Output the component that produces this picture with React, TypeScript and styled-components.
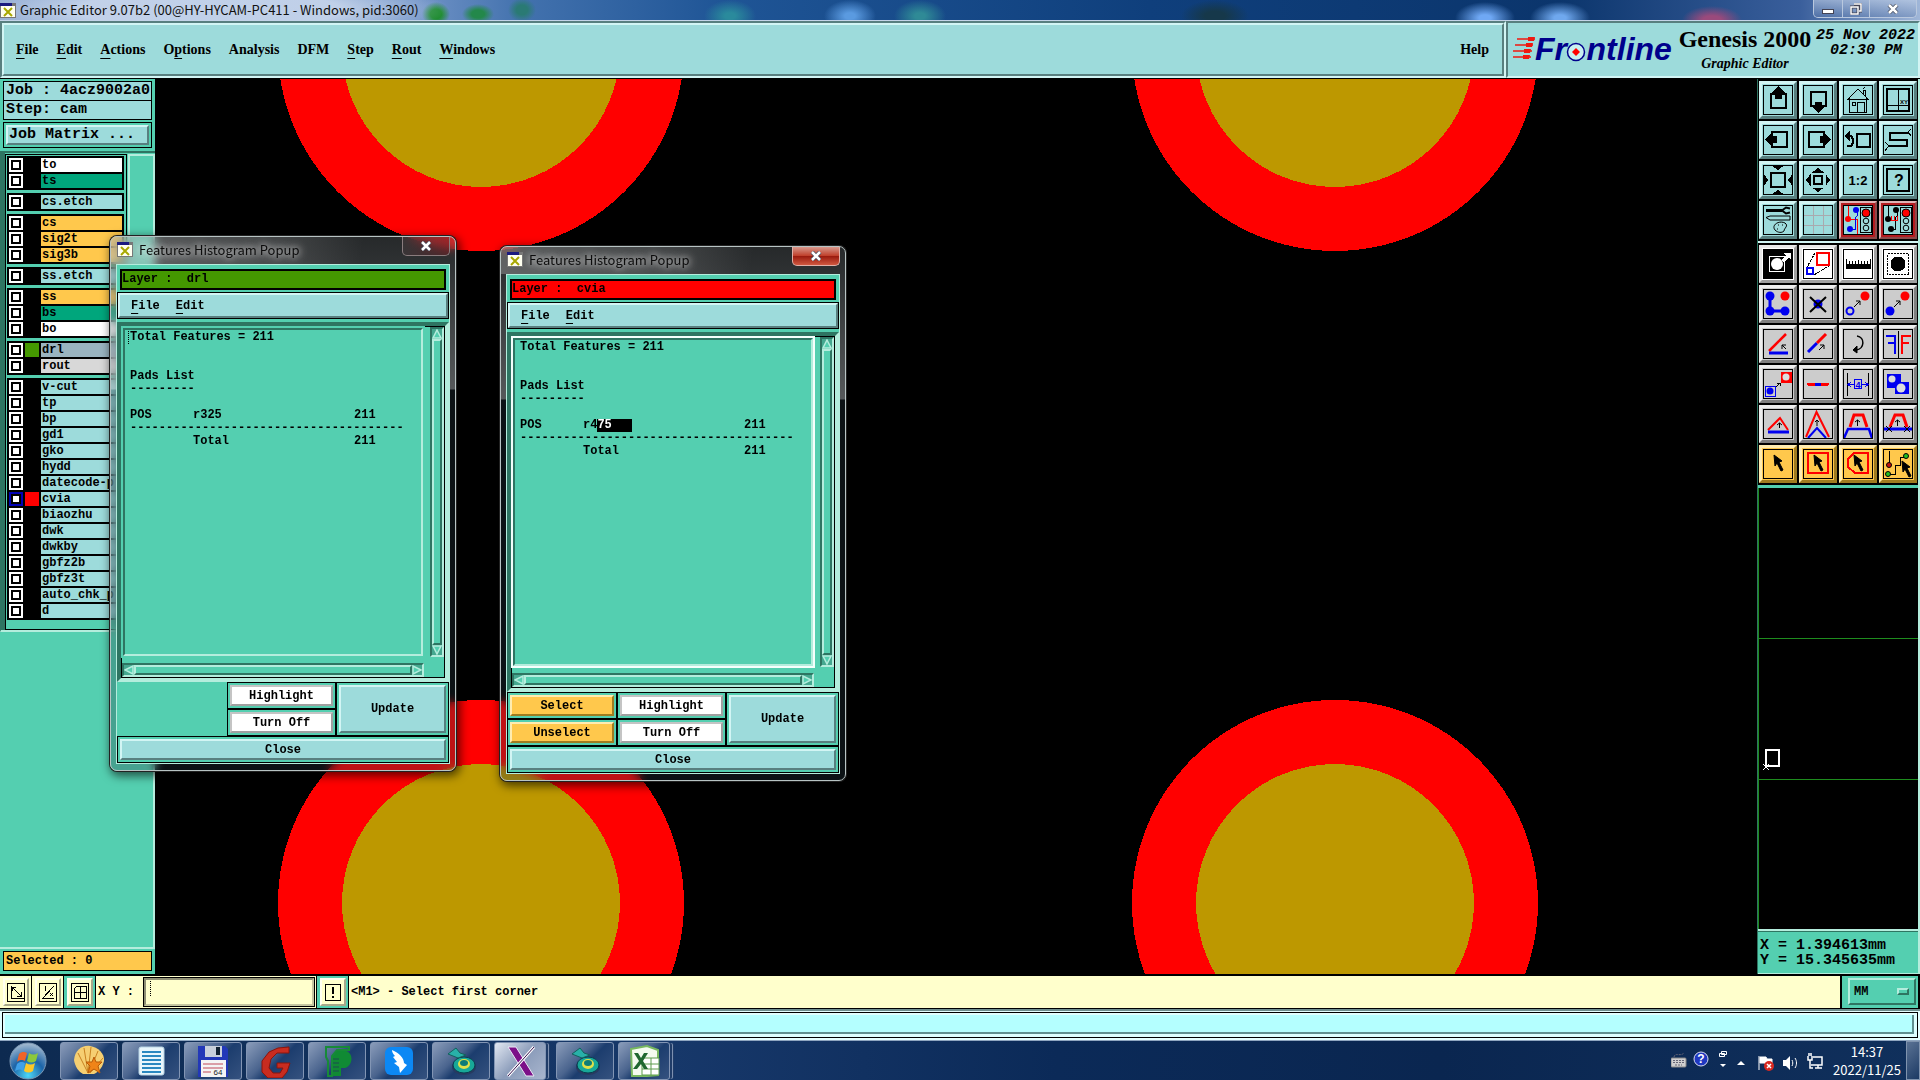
import React from "react";
import styled, { createGlobalStyle, css } from "styled-components";

const TEAL = "#54cfb0";
const TEAL_LIGHT = "#b4eddd";
const TEAL_DARK = "#2e7562";
const CYAN = "#9ddbdb";
const CYAN_LIGHT = "#d2f5f4";
const CYAN_DARK = "#587f7f";
const AMBER = "#ffc84c";
const CREAM = "#ffffcc";
const MONO = '"Liberation Mono", "Courier New", monospace';
const SERIF = '"Liberation Serif", "Times New Roman", serif';
const UI = '"Noto Sans CJK SC", "Open Sans", sans-serif';

const GlobalStyle = createGlobalStyle`
  *, *::before, *::after { box-sizing: border-box; }
  body { margin: 0; background: #000; overflow: hidden; }
  button, input, select { font: inherit; color: inherit; margin: 0; padding: 0; border: 0; border-radius: 0; }
  svg { display: block; }
`;

const raised = (light: string, dark: string, size = 2) => css`
  border: ${size}px solid;
  border-color: ${light} ${dark} ${dark} ${light};
`;

const Screen = styled.div`
  height: 100vh;
  display: flex;
  flex-direction: column;
  font: bold 12px/14px ${MONO};
  color: #000;
`;

/* ---------- window title ---------- */

const TitleBar = styled.header`
  height: 21px;
  flex: none;
  display: flex;
  align-items: center;
  gap: 4px;
  font: 13px/20px ${UI};
  color: #111;
  border-bottom: 1px solid #c4d4e8;
  background:
    radial-gradient(ellipse 240px 34px at 210px 10px, rgba(200, 214, 236, 0.9) 55%, transparent),
    radial-gradient(ellipse 14px 12px at 436px 14px, #1b8a2c 40%, transparent),
    radial-gradient(ellipse 16px 10px at 478px 14px, #23884a 40%, transparent),
    radial-gradient(ellipse 14px 12px at 522px 10px, #2a7a74 40%, transparent),
    radial-gradient(ellipse 26px 16px at 730px 16px, #2a8a9c 20%, transparent),
    radial-gradient(ellipse 26px 16px at 850px 16px, #5a9ae0 20%, transparent),
    radial-gradient(ellipse 26px 16px at 920px 16px, #2f8a96 20%, transparent),
    radial-gradient(ellipse 34px 16px at 1215px 16px, #16384a 30%, transparent),
    radial-gradient(ellipse 30px 16px at 1485px 18px, #6fa8f4 20%, transparent),
    radial-gradient(ellipse 30px 16px at 1560px 18px, #6fa8ee 20%, transparent),
    radial-gradient(ellipse 30px 14px at 1712px 20px, #9a4a7c 30%, transparent),
    linear-gradient(90deg, #8fa9d0 0, #6f92c6 420px, #4372ae 520px, #1f5596 720px, #0f3f7c 1150px, #0b356c 1560px, #3a5f9c 1800px, #9fb6d8 100%);
`;
const TitleText = styled.h1`
  flex: 1;
  margin: 0;
  font: inherit;
`;
const Controls = styled.div`
  display: flex;
  align-self: flex-start;
  margin-right: 3px;
  border: 1px solid #b9c8de;
  border-top: 0;
  border-radius: 0 0 5px 5px;
  overflow: hidden;
`;
const ControlButton = styled.button<{ $w: number }>`
  width: ${p => p.$w}px;
  height: 17px;
  display: grid;
  place-items: center;
  background: linear-gradient(rgba(190, 206, 230, 0.6), rgba(90, 120, 170, 0.4));
  & + & { border-left: 1px solid #b9c8de; }
`;

/* ---------- menu and brand ---------- */

const TopRow = styled.div`
  height: 58px;
  flex: none;
  display: flex;
  background: ${CYAN};
  border-bottom: 1px solid #000;
`;
const MenuFrame = styled.div`
  flex: 1;
  ${raised(CYAN_DARK, CYAN_LIGHT)}
`;
const MenuBar = styled.nav`
  height: 100%;
  display: flex;
  align-items: center;
  gap: 18px;
  padding: 0 13px 0 12px;
  ${raised(CYAN_LIGHT, CYAN_DARK)}
  font: bold 14px/20px ${SERIF};
`;
const MenuButton = styled.button<{ $end?: boolean }>`
  background: none;
  margin-left: ${p => (p.$end ? "auto" : "0")};
  u { text-underline-offset: 4px; text-decoration-thickness: 1px; }
`;
const Brand = styled.div`
  width: 414px;
  flex: none;
  display: flex;
  align-items: flex-start;
  justify-content: space-between;
  padding: 1px 3px 0 4px;
  ${raised(CYAN_DARK, CYAN_LIGHT)}
`;
const Product = styled.div`
  display: flex;
  flex-direction: column;
  align-items: center;
  font: bold 24px/30px ${SERIF};
`;
const ProductPart = styled.span`
  font: italic bold 14px/20px ${SERIF};
`;
const DateText = styled.time`
  font: italic bold 15px/15px ${MONO};
  text-align: right;
  padding-top: 4px;
  span { display: block; padding-right: 13px; }
`;

/* ---------- main area ---------- */

const Main = styled.main`
  flex: 1;
  min-height: 0;
  display: flex;
  position: relative;
  background: #000;
`;
const Side = styled.aside`
  width: 155px;
  flex: none;
  display: flex;
  flex-direction: column;
  background: ${TEAL};
  font-size: 15px;
  line-height: 18px;
`;
const InfoBox = styled.div`
  margin: 2px 3px 0;
  height: 20px;
  padding: 0 2px;
  border: 1px solid #000;
  background: ${CYAN};
  white-space: nowrap;
  overflow: hidden;
  & + & { margin-top: 0; height: 19px; border-top: 0; }
`;
const MatrixFrame = styled.div`
  margin: 2px 3px 3px;
  padding: 2px;
  border: 1px solid #000;
`;
const MatrixButton = styled.button`
  display: block;
  width: 100%;
  height: 20px;
  padding-left: 1px;
  text-align: left;
  line-height: 16px;
  background: ${CYAN};
  ${raised(CYAN_LIGHT, CYAN_DARK)}
`;
const LayerPane = styled.section`
  display: flex;
  flex: none;
  padding: 1px 0 0 4px;
  border-top: 2px solid ${TEAL_DARK};
  border-left: 1px solid ${TEAL_DARK};
  border-bottom: 2px solid ${TEAL_LIGHT};
  background: linear-gradient(90deg, ${TEAL_DARK} 4px, ${TEAL} 4px);
`;
const LayerList = styled.div`
  width: 122px;
  display: flex;
  flex-direction: column;
  gap: 3px;
  padding: 1px 2px 9px 1px;
  border: 1px solid #000;
  font-size: 12px;
  line-height: 14px;
`;
const LayerGroup = styled.div`
  display: grid;
  gap: 2px;
  padding: 2px;
  background: #000;
`;
const LayerRow = styled.label`
  display: grid;
  grid-template-columns: 14px 14px 1fr;
  column-gap: 2px;
  height: 14px;
`;
const LayerTick = styled.input`
  appearance: none;
  width: 14px;
  height: 14px;
  border: 2px solid #fff;
  background: #fff;
  box-shadow: inset 0 0 0 2px #000;
  &:checked { border-color: #0000b4; }
`;
const Swatch = styled.span<{ $color: string }>`
  background: ${p => p.$color};
`;
const LayerName = styled.span<{ $color: string }>`
  background: ${p => p.$color};
  padding-left: 1px;
  white-space: nowrap;
  overflow: hidden;
`;
const LayerTrough = styled.div`
  flex: 1;
  margin-left: 1px;
  border: 2px solid ${TEAL_LIGHT};
  border-bottom: 0;
`;
const SideFill = styled.div`
  flex: 1;
  border-right: 2px solid ${TEAL_LIGHT};
  border-bottom: 2px solid ${TEAL_LIGHT};
`;
const SelectedBox = styled.div`
  margin: 2px 3px 3px;
  height: 20px;
  padding-left: 2px;
  border: 1px solid #000;
  background: ${AMBER};
  font-size: 12px;
`;
const Canvas = styled.div`
  flex: 1;
  min-width: 0;
  svg { width: 100%; height: 100%; }
`;
const Tools = styled.aside`
  width: 163px;
  flex: none;
  display: flex;
  flex-direction: column;
  background: #000;
  border-left: 1px solid ${TEAL_DARK};
  border-right: 2px solid ${TEAL_LIGHT};
`;
const Palette = styled.div<{ $edge: string }>`
  display: grid;
  grid-template-columns: repeat(4, 38px);
  gap: 2px;
  padding: 2px 0 2px 1px;
  border-bottom: 2px solid ${p => p.$edge};
`;
type Tone = "cyan" | "red" | "white" | "gray" | "amber";
const tones: Record<Tone, [string, string, string]> = {
  cyan: [CYAN, CYAN_LIGHT, CYAN_DARK],
  red: [CYAN, "#e0b4b4", "#8a4a4a"],
  white: ["#fff", "#e8e8e8", "#a0a0a0"],
  gray: ["#cccccc", "#eeeeee", "#808080"],
  amber: [AMBER, "#ffecb0", "#a07c20"],
};
const ToolButton = styled.button<{ $tone: Tone }>`
  width: 38px;
  height: 38px;
  display: grid;
  place-items: center;
  background: ${p => tones[p.$tone][0]};
  ${p => raised(tones[p.$tone][1], tones[p.$tone][2], p.$tone === "red" ? 2 : 3)}
  box-shadow: ${p => (p.$tone === "red" ? "inset 0 0 0 2px #b41c20" : "none")};
`;
const Overview = styled.div`
  flex: 1;
  border-top: 1px solid ${TEAL};
  border-bottom: 2px solid ${TEAL_LIGHT};
  svg { width: 100%; height: 100%; }
`;
const Coordinates = styled.div`
  height: 43px;
  flex: none;
  padding: 6px 2px;
  border-top: 1px solid ${TEAL_DARK};
  border-bottom: 1px solid ${TEAL_LIGHT};
  background: ${TEAL};
  font-size: 15px;
  line-height: 15px;
`;

/* ---------- command line ---------- */

const CommandBar = styled.div`
  height: 35px;
  flex: none;
  display: flex;
  align-items: stretch;
  background: ${CREAM};
  border-top: 2px solid #000;
  border-bottom: 1px solid #000;
`;
const ModeCell = styled.div<{ $bg: string }>`
  width: 32px;
  display: grid;
  place-items: center;
  background: ${p => p.$bg};
  border-right: 1px solid #000;
`;
const ModeButton = styled.button`
  width: 26px;
  height: 28px;
  display: grid;
  place-items: center;
  background: ${CREAM};
  ${raised("#fffff0", "#a8a88a")}
`;
const XYLabel = styled.label`
  width: 47px;
  padding-left: 2px;
  align-self: center;
`;
const XYInput = styled.input`
  width: 170px;
  background: ${CREAM};
  margin-top: 2px;
  padding: 0 4px;
  border: 2px solid;
  border-color: #8e8e74 #c6c6a0 #c6c6a0 #8e8e74;
  outline: 1px solid #000;
`;
const Entry = styled.div`
  position: relative;
  display: flex;
  padding: 0 2px 2px 1px;
  border-right: 1px solid #000;
`;
const Caret = styled.i`
  position: absolute;
  left: 7px;
  top: 5px;
  height: 15px;
  border-left: 1px dotted #000;
`;
const Prompt = styled.output`
  flex: 1;
  align-self: center;
  padding-left: 2px;
`;
const UnitCell = styled.div`
  position: relative;
  width: 80px;
  padding: 2px;
  border-left: 2px solid #000;
  border-right: 2px solid #000;
  background: ${TEAL};
`;
const UnitSelect = styled.select`
  appearance: none;
  display: block;
  width: 68px;
  height: 27px;
  margin-left: 4px;
  padding-left: 4px;
  background: ${TEAL};
  ${raised(TEAL_LIGHT, TEAL_DARK)}
`;
const UnitMark = styled.i`
  position: absolute;
  right: 9px;
  top: 12px;
  width: 12px;
  height: 7px;
  pointer-events: none;
  ${raised(TEAL_LIGHT, TEAL_DARK)}
`;
const Strip = styled.div`
  height: 31px;
  flex: none;
  background: #e4ffff;
  padding: 1px 2px 2px;
  border-top: 2px solid #6f8f8f;
`;
const StripField = styled.div`
  height: 100%;
  border: 1px solid #000;
  background: #b4ffff;
  box-shadow: inset 2px 2px #e0ffff, inset -3px -3px #dcffff, inset -5px -5px #5f9090;
`;

/* ---------- taskbar ---------- */

const Taskbar = styled.footer`
  height: 40px;
  flex: none;
  display: flex;
  align-items: center;
  gap: 4px;
  color: #fff;
  border-top: 1px solid #8fa6c0;
  background: linear-gradient(90deg, #0d2a50, #17386a 35%, #0b2a58 55%, #0a2650 75%, #10305c);
  font: 13px/18px ${UI};
`;
const Orb = styled.button`
  width: 56px;
  background: none;
  display: grid;
  place-items: center;
`;
const TaskButton = styled.button<{ $active?: boolean; $stack?: boolean }>`
  width: ${p => (p.$stack ? 52 : 58)}px;
  margin-right: ${p => (p.$stack ? 6 : 0)}px;
  height: 38px;
  display: grid;
  place-items: center;
  border: 1px solid #8295b4;
  border-radius: 3px;
  background: ${p => p.$active
    ? "linear-gradient(135deg, #e2e8f2, #8b9cba 50%, #a9b6ce)"
    : "linear-gradient(135deg, #8a9cba, #4a648e 40%, #1c3d6e 55%, #35527f)"};
  box-shadow: ${p => (p.$stack ? "3px 0 0 -1px #203c68, 4px 0 0 -1px #7d90b0, 6px 0 0 -2px #203c68" : "none")};
`;
const Tray = styled.div`
  margin-left: auto;
  display: flex;
  align-items: center;
`;
const Clock = styled.time`
  width: 78px;
  margin-left: 5px;
  text-align: center;
  span { display: block; }
`;
const ShowDesktop = styled.button`
  width: 14px;
  height: 39px;
  border: 1px solid #7f93ae;
  background: linear-gradient(135deg, #5a7294, #1c3a64);
`;

/* ---------- popup windows ---------- */

const Popup = styled.section<{ $x: number; $y: number }>`
  position: absolute;
  left: ${p => p.$x}px;
  top: ${p => p.$y}px;
  width: 346px;
  padding: 0 5px 6px;
  border: 1px solid #b8c4c4;
  border-radius: 7px;
  box-shadow: 0 0 0 1px #222, 2px 3px 10px 2px rgba(0, 0, 0, 0.6);
  backdrop-filter: blur(5px);
  background:
    linear-gradient(100deg, rgba(255, 255, 255, 0.25), rgba(255, 255, 255, 0.12) 170px, transparent 250px) top / 100% 27px no-repeat,
    linear-gradient(rgba(110, 118, 122, 0.35), rgba(170, 176, 180, 0.5) 152px, rgba(40, 60, 70, 0.3) 153px);
`;
const PopupTitle = styled.header`
  height: 27px;
  display: flex;
  align-items: center;
  gap: 6px;
  padding: 0 0 2px 1px;
  font: 13px/20px ${UI};
  color: #0c0c0c;
`;
const PopupName = styled.h2`
  flex: 1;
  margin: 0;
  padding: 0;
  font: inherit;
  text-shadow: 0 0 6px rgba(255, 255, 255, 0.6), 0 0 10px rgba(255, 255, 255, 0.6), 0 0 12px rgba(255, 255, 255, 0.5);
`;
const PopupClose = styled.button<{ $hot?: boolean }>`
  width: 48px;
  height: 19px;
  align-self: flex-start;
  display: grid;
  place-items: center;
  border: 1px solid ${p => (p.$hot ? "#e0b0a8" : "#8a7c7e")};
  border-top: 0;
  border-radius: 0 0 5px 5px;
  background: ${p => (p.$hot
    ? "linear-gradient(#d8988c, #c0402c 48%, #98180c 50%, #d05840)"
    : "linear-gradient(90deg, rgba(70, 60, 62, 0.5), rgba(110, 30, 36, 0.5))")};
`;
const PopupBody = styled.div`
  background: ${TEAL};
  border: 1px solid ${TEAL_LIGHT};
`;
const LayerBar = styled.div<{ $color: string }>`
  height: 21px;
  margin: 4px 3px 2px;
  line-height: 17px;
  white-space: pre;
  border: 2px solid #000;
  background: ${p => p.$color};
`;
const PopupMenu = styled.nav`
  height: 27px;
  display: flex;
  gap: 16px;
  padding-left: 11px;
  background: ${CYAN};
  outline: 1px solid #000;
  outline-offset: -1px;
  ${raised(CYAN_LIGHT, CYAN_DARK, 3)}
`;
const ScrollWindow = styled.div`
  height: 360px;
  margin-top: 3px;
  ${raised(TEAL_DARK, TEAL_LIGHT, 4)}
`;
const ScrollGrid = styled.div`
  height: 100%;
  display: grid;
  grid-template: 1fr 14px / 1fr 14px;
  gap: 6px;
  border: 1px solid #000;
`;
const Report = styled.div<{ $focus?: boolean }>`
  padding: 1px 5px;
  line-height: 13px;
  position: relative;
  ${raised(TEAL_DARK, TEAL_LIGHT)}
  outline: 2px solid ${p => (p.$focus ? "#f4fffc" : TEAL)};
  margin: 1px;
`;
const Line = styled.div`
  height: 13px;
  white-space: pre;
`;
const Record = styled.div`
  display: grid;
  grid-template-columns: 63px 161px auto;
  height: 13px;
`;
const Marked = styled.mark`
  display: inline-block;
  width: 35px;
  background: #000;
  color: #fff;
`;
const ReportCaret = styled(Caret)`
  left: 3px;
  top: 1px;
  height: 13px;
`;
const VScroll = styled.div`
  display: flex;
  flex-direction: column;
  ${raised(TEAL_DARK, TEAL_LIGHT)}
  background: #45a890;
`;
const HScroll = styled.div`
  display: flex;
  ${raised(TEAL_DARK, TEAL_LIGHT)}
  background: #45a890;
`;
const Thumb = styled.div`
  flex: 1;
  background: ${TEAL};
  ${raised(TEAL_LIGHT, TEAL_DARK)}
`;
const ActionGrid = styled.div`
  display: grid;
  grid-template: 27px 27px 27px / 110px 109px 1fr;
`;
const ActionCell = styled.div<{ $area: string }>`
  grid-area: ${p => p.$area};
  padding: 2px;
  border: 1px solid #000;
`;
const Action = styled.button<{ $tone: Tone }>`
  display: block;
  width: 100%;
  height: 100%;
  background: ${p => tones[p.$tone][0]};
  ${p => raised(p.$tone === "white" ? "#c4c4c4" : tones[p.$tone][1], tones[p.$tone][2])}
`;

/* ---------- drawings ---------- */

const K = "#000", R = "#f00", B = "#0000f0";

const Glyph = ({ children }: { children?: React.ReactNode }) => (
  <svg width="30" height="30" viewBox="0 0 30 30" fill="none" stroke={K} strokeWidth="1" shapeRendering="crispEdges" aria-hidden="true">
    {children}
    <rect x=".5" y=".5" width="29" height="29" />
  </svg>
);
const SmallText = ({ x, y, size, fill = K, children }: { x: number; y: number; size: number; fill?: string; children: string }) => (
  <text x={x} y={y} fontSize={size} fill={fill} stroke="none" textAnchor="middle" fontFamily="Liberation Sans" fontWeight="bold">{children}</text>
);
const TrafficLight = () => (
  <g shapeRendering="auto">
    <rect x="17.500" y="2.500" width="11" height="25" />
    <circle cx="23" cy="8" r="4" fill={R} />
    <circle cx="23" cy="16" r="2.800" />
    <circle cx="23" cy="23" r="2.800" />
  </g>
);
const Pointer = ({ x = 0, y = 0 }: { x?: number; y?: number }) => (
  <path transform={`translate(${x} ${y})`} d="M11 6l8 6-3 1 4 8-2 1-4-8-2 3z" fill={K} stroke={K} shapeRendering="auto" />
);

type Tool = [string, Tone, React.ReactNode];

const viewTools: Tool[] = [
  ["Pan up", "cyan", <><rect x="8" y="9" width="15" height="14" strokeWidth="2" /><path d="M15.500 2l5 5h-2v6h-6V7h-2z" fill={K} /></>],
  ["Pan down", "cyan", <><rect x="8" y="7" width="15" height="14" strokeWidth="2" /><path d="M15.500 27l5-5h-2v-5h-6v5h-2z" fill={K} /></>],
  ["Home view", "cyan", <path d="M4 15L15 4l11 11M6.500 13v14h17V13M4 14.500h22M14.500 27V17.500h7V27M9.500 17.500h3v3h-3zM20.500 9V5.500h2V11M20 4l2-2" />],
  ["Split view", "cyan", <><rect x="4" y="4" width="22" height="22" strokeWidth="2" /><path d="M15.500 4v22M4 20.500h22" /><SmallText x={21} y={19} size={6}>XY</SmallText></>],
  ["Pan left", "cyan", <><rect x="9" y="7" width="15" height="15" strokeWidth="2" /><path d="M3 14.500l5-5v2h5v6H8v2z" fill={K} /></>],
  ["Pan right", "cyan", <><rect x="6" y="7" width="15" height="15" strokeWidth="2" /><path d="M27 14.500l-5-5v2h-5v6h5v2z" fill={K} /></>],
  ["Previous view", "cyan", <><rect x="14" y="9" width="13" height="13" strokeWidth="2" /><path d="M4 21h4l2-3v-4l-2-3H5" strokeWidth="2" /><path d="M2 11l4-4v8z" fill={K} /></>],
  ["Serpentine", "cyan", <><path d="M26 8H7v7h17v6H5" strokeWidth="2" /><path d="M25 7l3-3M26 8l2 3M5 20l-3-3M5 22l-3 4" /></>],
  ["Zoom in", "cyan", <><rect x="8" y="8" width="14" height="14" strokeWidth="2" /><path d="M11 1.500h8l-4 3zM11 28.500h8l-4-3zM1.500 11v8l3-4zM28.500 11v8l-3-4z" fill={K} /></>],
  ["Zoom out", "cyan", <><rect x="11" y="11" width="8" height="8" strokeWidth="2" /><path d="M10.500 7h9L15 3.500zM10.500 23h9L15 26.500zM7 10.500v9L3.500 15zM23 10.500v9l3.500-4.500z" fill={K} /></>],
  ["Scale one to two", "cyan", <SmallText x={15} y={20} size={13}>1:2</SmallText>],
  ["Query", "cyan", <><rect x="4" y="4" width="22" height="22" strokeWidth="2" /><SmallText x={16} y={21} size={16}>?</SmallText></>],
  ["Settings", "cyan", <g shapeRendering="auto"><path d="M3 5.500h16" strokeWidth="3" /><path d="M27 3.500l-4-1-4 3 4 3 4-1" strokeWidth="2" /><path d="M3 12.500l4-1.500h20v4H7zM12 25c-4-5 4-10 10-7 4 3-1 5-1 8-2 2-6 2-9-1zM15 20h1M19 20h1M14 24h1" /></g>],
  ["Grid", "cyan", <path d="M10.500 1v28M20.500 1v28M1 10.500h28M1 20.500h28" stroke="#a9a9ae" />],
  ["Net check", "red", <><path d="M5.500 1v13h9v15" stroke={R} /><path d="M14.500 4v6l-2 3v11h-5" stroke={B} /><g stroke="none" shapeRendering="auto"><circle cx="5" cy="14" r="3" fill={R} /><circle cx="13" cy="5" r="3" fill={B} /><circle cx="7" cy="24" r="3" fill={B} /></g><TrafficLight /></>],
  ["Rule check", "red", <><path d="M5.500 1v13M14.500 4v6l-2 3v11h-4" /><path d="M7 15.500h8M8.500 11v4M11.500 11v4M14.500 11v4" stroke={R} /><g fill={K} stroke="none" shapeRendering="auto"><circle cx="5" cy="14" r="3" /><circle cx="13" cy="5" r="3" /><circle cx="8" cy="24" r="3" /></g><TrafficLight /></>],
];

const editTools: Tool[] = [
  ["Pad to outline", "white", <><rect x="1" y="1" width="28" height="28" fill={K} /><rect x="6.500" y="7.500" width="15" height="15" stroke="#fff" /><circle cx="14" cy="15" r="6" fill="#fff" stroke="none" shapeRendering="auto" /><path d="M18 11l5-5-3-2h8v7l-2-2-5 4z" fill="#fff" stroke="none" /></>],
  ["Copy scaled", "white", <><path d="M3 20L13 2M11 26l16-10" strokeDasharray="3 1" /><rect x="14" y="4" width="12" height="12" stroke={R} strokeWidth="2" /><rect x="4" y="19" width="6" height="6" stroke={B} strokeWidth="2" /></>],
  ["Measure", "white", <><rect x="3" y="15" width="25" height="5" fill={K} stroke="none" /><path d="M3.500 10v5M6.500 12v3M9.500 12v3M12.500 12v3M15.500 11v4M18.500 12v3M21.500 12v3M24.500 12v3M27.500 10v5" /></>],
  ["Snap to pad", "white", <><rect x="4.500" y="4.500" width="21" height="21" strokeDasharray="2 1" /><circle cx="15" cy="15" r="7" fill={K} /></>],
  ["Add feature", "gray", <g shapeRendering="auto"><path d="M7 7v15h16" stroke={B} strokeWidth="3" /><g stroke="none"><circle cx="7" cy="7" r="4.500" fill={B} /><circle cx="7" cy="22" r="4.500" fill={B} /><circle cx="22" cy="22" r="4.500" fill={B} /><circle cx="22" cy="7" r="4.500" fill={R} /></g></g>],
  ["Delete feature", "gray", <g shapeRendering="auto"><circle cx="15" cy="15" r="4.500" fill={B} stroke="none" /><path d="M7 8l16 15M23 8L7 23" strokeWidth="2" /></g>],
  ["Move feature", "gray", <g shapeRendering="auto"><circle cx="22" cy="7" r="4.500" fill={R} stroke="none" /><circle cx="7" cy="22" r="3.500" stroke={B} strokeWidth="2" /><path d="M11 18l6-6M13 12h4v4" /></g>],
  ["Copy feature", "gray", <g shapeRendering="auto"><circle cx="22" cy="7" r="4.500" fill={R} stroke="none" /><circle cx="7" cy="22" r="4.500" fill={B} stroke="none" /><path d="M11 18l6-6M13 12h4v4" /></g>],
  ["Rotate line", "gray", <g shapeRendering="auto"><path d="M6 22L23 5" stroke={R} strokeWidth="2.500" /><path d="M6 24h19" stroke={B} strokeWidth="3" /><path d="M23 20l-4-4M19 20v-4h4" /></g>],
  ["Extend line", "gray", <g shapeRendering="auto"><path d="M5 23l9-9" stroke={B} strokeWidth="3" /><path d="M14 14l9-9" stroke={R} strokeWidth="3" /><path d="M16 21l5-5M17 16h4v4" /></g>],
  ["Rotate", "gray", <g shapeRendering="auto"><path d="M14 7c8 1 8 13-1 14" strokeWidth="1.500" /><path d="M10 21l4-4v7z" fill={K} /></g>],
  ["Mirror", "gray", <><path d="M15.500 2v28" /><path d="M3 7h9v18M5 14h7" stroke={B} strokeWidth="2" /><path d="M28 7h-9v18M26 14h-7" stroke={R} strokeWidth="2" /></>],
  ["Replace pad", "gray", <><rect x="18" y="3" width="11" height="11" fill={R} stroke="none" /><rect x="2.500" y="17.500" width="10" height="10" stroke={B} /><g stroke="none" shapeRendering="auto"><circle cx="23" cy="8" r="3.500" fill="#ddd" /><circle cx="7" cy="22" r="3.500" fill={B} /></g><path d="M13 18l4-4M14 14h3v3" /></>],
  ["Join lines", "gray", <><path d="M5 15h20" stroke={R} strokeWidth="3" strokeLinecap="round" /><path d="M12 15h6" stroke={B} strokeWidth="3" /></>],
  ["Spacing", "gray", <><path d="M4.500 4v23M25.500 4v23" /><g stroke={B}><path d="M5 15.500h7M18 15.500h7M8 13l-3 2.500L8 18M22 13l3 2.500L22 18" /><rect x="11.500" y="10.500" width="7" height="9" /></g><SmallText x={15} y={19} size={9} fill={B}>4</SmallText></>],
  ["Merge pads", "gray", <><rect x="4" y="5" width="14" height="14" fill={B} stroke="none" /><rect x="12" y="13" width="14" height="12" fill={B} stroke="none" /><g fill="#ddd" stroke="none" shapeRendering="auto"><circle cx="9" cy="10" r="3.500" /><circle cx="18" cy="19" r="4.500" /></g></>],
  ["Raise line", "gray", <g shapeRendering="auto"><path d="M5 21L17 9l8 12" stroke={R} strokeWidth="2" /><path d="M5 23h21" stroke={B} strokeWidth="3" /><path d="M16.500 19v-5M14 16l2.500-2 2.500 2" /></g>],
  ["Raise corner", "gray", <g shapeRendering="auto"><path d="M3 28L13.500 3 26 28" stroke={R} strokeWidth="2" /><path d="M5 29l9-10 9 10" stroke={B} strokeWidth="2" /><path d="M14 17v-6M12 13l2-2 2 2" /></g>],
  ["Raise segment", "gray", <g shapeRendering="auto"><path d="M7 18L11 6h9l4 12" stroke={R} strokeWidth="3" /><path d="M1 29l4-9h21l3 9" stroke={B} strokeWidth="2.500" /><path d="M14.500 17v-6M12 13l2.500-2 2.500 2" /></g>],
  ["Cut segment", "gray", <g shapeRendering="auto"><path d="M7 18L12 6h8l4 12" stroke={R} strokeWidth="3" /><path d="M1 20h28" stroke={B} strokeWidth="3" /><path d="M14.500 17v-6M12 13l2.500-2 2.500 2M3 17l6 6M9 17l-6 6M21 17l6 6M27 17l-6 6" /></g>],
  ["Select", "amber", <Pointer />],
  ["Select in box", "amber", <><rect x="5" y="4" width="20" height="20" stroke={R} strokeWidth="2" /><Pointer /></>],
  ["Select in polygon", "amber", <><path d="M11 4h14v20H12l-7-6v-8z" stroke={R} strokeWidth="2" /><Pointer /></>],
  ["Select net", "amber", <><path d="M6.500 2v14M6 25h6v-9h5V8h6" /><g shapeRendering="auto"><circle cx="6" cy="16" r="2.500" fill="#c01010" /><circle cx="5" cy="25" r="2.500" fill="#20c020" /><circle cx="23" cy="7" r="2.500" fill="#20c020" /></g><Pointer x={8} y={6} /></>],
];

const AppIcon = () => (
  <svg width="16" height="15" viewBox="0 0 16 15" aria-hidden="true">
    <path d="M0 0h16v15H0z" fill="#777" /><path d="M1 3h14v11H1z" fill="#fffff0" /><path d="M0 0h12v3H0z" fill="#1a1a80" />
    <path d="M4 5l8 8M12 5l-8 8" stroke="#a8a800" strokeWidth="2" />
  </svg>
);
const CloseMark = () => (
  <svg width="12" height="10" viewBox="0 0 12 10" aria-hidden="true">
    <path d="M2 1l8 8M10 1L2 9" stroke="#40485a" strokeWidth="4" /><path d="M2 1l8 8M10 1L2 9" stroke="#fff" strokeWidth="2.500" />
  </svg>
);
const FrontlineLogo = () => (
  <svg width="162" height="50" viewBox="0 0 162 50" aria-label="Frontline">
    <g stroke="#f01810" strokeWidth="1.500"><path d="M5 15h18M3 21h18M1 27h19M1 33h18" /></g>
    <path d="M16 13h7l-1 4h-6zM14 19h7l-1 4h-6zM12 25h7l-1 4h-6zM11 31h7l-1 4h-6z" fill="#f01810" />
    <text x="23" y="36" fontFamily="Liberation Sans" fontSize="32" fontWeight="bold" fontStyle="italic" fill="#00008c">Fr<tspan fill="none">o</tspan>ntline</text>
    <circle cx="64" cy="28" r="8.500" fill="#c8f0f0" stroke="#00008c" strokeWidth="1.500" /><path d="M64 24l4 4-4 4-4-4z" fill={R} />
  </svg>
);

const icons: Record<string, React.ReactNode> = {
  shell: <><path d="M2 16C3 6 10 1 18 2s15 8 14 15c-2 8-6 11-10 13H11C7 28 3 23 2 16z" fill="#f6cf72" /><path d="M16 29L6 9M16 29L12 4M16 29L19 3M17 29L26 7M18 29l13-15" stroke="#c98220" strokeWidth="1" /><path d="M22 13l2 5 6 0-4 4 2 7-6-4-6 4 2-7-4-4h6z" fill="#f08418" stroke="#b85a08" /></>,
  notes: <><rect x="5" y="3" width="25" height="28" rx="2" fill="#e8f6fc" stroke="#b8d4e4" /><path d="M8 8h19M8 12h19M8 16h19M8 20h19M8 24h19M8 28h19" stroke="#2a88c0" strokeWidth="2" /></>,
  floppy: <><path d="M2 2h27l3 3v28H2z" fill="#2238b8" /><path d="M9 2h17v11H9z" fill="#c8d0dc" /><path d="M20 3h4v8h-4z" fill="#112233" /><path d="M5 16h25v17H5z" fill="#f4f4f4" /><path d="M7 20h20M7 24h20M7 28h8" stroke="#c04858" /><text x="22" y="31" fontSize="8" fill="#222" fontFamily="Liberation Sans" textAnchor="middle">64</text></>,
  gerber: <path d="M31 3v6H19l-6 6-2 9 4 5h7l3-5h-6v-5h13l-3 9-5 6H10l-6-6V17l7-9 9-4z" fill="#c82c20" stroke="#8c140c" />,
  plot: <><path d="M29 3H6v10l2 4v15h4V12l5-6h12z" stroke="#178a38" strokeWidth="2" /><path d="M17 7h9c8 2 7 15-1 17h-4v8h-8V12z" fill="#108a34" /><path d="M13 15h6M13 19h6M13 23h6M13 27h6" stroke="#1c4a50" /></>,
  bird: <><rect x="3" y="3" width="28" height="28" rx="6" fill="#0c88f4" /><path d="M10 6c7 3 12 8 12 13l3 2-7 8-1-6-5-4 3-1-4-5 2-1c-2-2-3-4-3-6z" fill="#fff" /></>,
  cam: <><ellipse cx="20" cy="23" rx="12" ry="8" fill="#283a60" /><ellipse cx="20" cy="21" rx="11" ry="8" fill="#18a898" stroke="#0a3c50" /><ellipse cx="20" cy="20" rx="6" ry="5" fill="#e0e048" /><ellipse cx="20" cy="19" rx="4" ry="3" fill="#0c7c78" /><path d="M4 10l8-6 4 5 6 2-8 3z" fill="#28b0a8" stroke="#14605c" /></>,
  xming: <><path d="M5 3h8l18 29h-8z" fill="#7c1088" stroke="#e8e8f4" /><path d="M31 3L5 32" stroke="#fff" strokeWidth="3" /><path d="M31 3L5 32" stroke="#34104c" /></>,
  excel: <><path d="M4 5l16-3 11 4v25l-11 1H5z" fill="#f4fbf0" stroke="#78b860" strokeWidth="2" /><path d="M15 14h17v17H15z" fill="#fff" stroke="#5c9c4c" /><path d="M15 20h17M15 25h17M24 14v17" stroke="#5c9c4c" /><path d="M7 9h4l3 5 3-5h4l-5 8 5 8h-4l-3-5-4 5H6l6-8z" fill="#206830" /></>,
};
const TaskIcon = ({ name }: { name: string }) => (
  <svg width="34" height="34" viewBox="0 0 34 34" fill="none" aria-hidden="true">{icons[name]}</svg>
);
const Arrow = ({ d }: { d: string }) => (
  <svg width="10" height="10" viewBox="0 0 10 10" aria-hidden="true"><path d={d} fill={TEAL} stroke={TEAL_LIGHT} strokeWidth="1.500" /></svg>
);
const ModeIcon = ({ children }: { children: React.ReactNode }) => (
  <svg width="20" height="22" viewBox="0 1 20 22" fill="none" stroke="#000" shapeRendering="crispEdges" aria-hidden="true">{children}</svg>
);

/* ---------- data ---------- */

type Layer = { name: string; bg?: string; swatch?: string; on?: boolean };
const GREEN = "#00a67c";
const layerGroups: Layer[][] = [
  [{ name: "to", bg: "#fff" }, { name: "ts", bg: GREEN }],
  [{ name: "cs.etch" }],
  [{ name: "cs", bg: AMBER }, { name: "sig2t", bg: AMBER }, { name: "sig3b", bg: AMBER }],
  [{ name: "ss.etch" }],
  [{ name: "ss", bg: AMBER }, { name: "bs", bg: GREEN }, { name: "bo", bg: "#fff" }],
  [{ name: "drl", bg: "#9ab4c0", swatch: "#449800" }, { name: "rout", bg: "#d8d8d8" }],
  [
    { name: "v-cut" }, { name: "tp" }, { name: "bp" }, { name: "gd1" }, { name: "gko" }, { name: "hydd" },
    { name: "datecode-p" }, { name: "cvia", swatch: R, on: true }, { name: "biaozhu" }, { name: "dwk" },
    { name: "dwkby" }, { name: "gbfz2b" }, { name: "gbfz3t" }, { name: "auto_chk_p" }, { name: "d" },
  ],
];

/* text before the mnemonic, the mnemonic, text after it */
const menus: [string, string, string][] = [
  ["", "F", "ile"], ["", "E", "dit"], ["", "A", "ctions"], ["O", "p", "tions"], ["Analysis", "", ""],
  ["DFM", "", ""], ["", "S", "tep"], ["", "R", "out"], ["", "W", "indows"],
];
const pads = [[326, -31], [1180, -31], [326, 824], [1180, 824]];
const tasks: { icon: string; label: string; active?: boolean; stack?: boolean }[] = [
  { icon: "shell", label: "Shell" }, { icon: "notes", label: "Notes" }, { icon: "floppy", label: "Disk" },
  { icon: "gerber", label: "Gerber" }, { icon: "plot", label: "Plot" }, { icon: "bird", label: "Messenger" },
  { icon: "cam", label: "CAM" }, { icon: "xming", label: "X server", active: true, stack: true },
  { icon: "cam", label: "CAM 2" }, { icon: "excel", label: "Spreadsheet", stack: true },
];

const HistogramPopup = ({ x, y, layer, color, pad, selectable }: {
  x: number; y: number; layer: string; color: string; pad: React.ReactNode; selectable?: boolean;
}) => (
  <Popup $x={x} $y={y}>
    <PopupTitle>
      <AppIcon />
      <PopupName>Features Histogram Popup</PopupName>
      <PopupClose $hot={selectable} aria-label="Close window"><CloseMark /></PopupClose>
    </PopupTitle>
    <PopupBody>
      <LayerBar $color={color}>{`Layer :  ${layer}`}</LayerBar>
      <PopupMenu>
        <MenuButton><u>F</u>ile</MenuButton>
        <MenuButton><u>E</u>dit</MenuButton>
      </PopupMenu>
      <ScrollWindow>
        <ScrollGrid>
          <Report $focus={selectable}>
            {!selectable && <ReportCaret />}
            <Line>Total Features = 211</Line>
            <Line /><Line />
            <Line>Pads List</Line>
            <Line>{"-".repeat(9)}</Line>
            <Line />
            <Record><span>POS</span><span>{pad}</span><span>211</span></Record>
            <Line>{"-".repeat(38)}</Line>
            <Record><span /><span>Total</span><span>211</span></Record>
          </Report>
          <VScroll><Arrow d="M5 1l4 8H1z" /><Thumb /><Arrow d="M5 9l4-8H1z" /></VScroll>
          <HScroll><Arrow d="M1 5l8-4v8z" /><Thumb /><Arrow d="M9 5L1 1v8z" /></HScroll>
        </ScrollGrid>
      </ScrollWindow>
      <ActionGrid>
        {selectable && <ActionCell $area="1 / 1"><Action $tone="amber">Select</Action></ActionCell>}
        {selectable && <ActionCell $area="2 / 1"><Action $tone="amber">Unselect</Action></ActionCell>}
        <ActionCell $area="1 / 2"><Action $tone="white">Highlight</Action></ActionCell>
        <ActionCell $area="2 / 2"><Action $tone="white">Turn Off</Action></ActionCell>
        <ActionCell $area="1 / 3 / 3 / 4"><Action $tone="cyan">Update</Action></ActionCell>
        <ActionCell $area="3 / 1 / 4 / 4"><Action $tone="cyan">Close</Action></ActionCell>
      </ActionGrid>
    </PopupBody>
  </Popup>
);

export default function App() {
  return (
    <Screen>
      <GlobalStyle />
      <TitleBar>
        <AppIcon />
        <TitleText>Graphic Editor 9.07b2 (00@HY-HYCAM-PC411 - Windows, pid:3060)</TitleText>
        <Controls>
          <ControlButton $w={28} aria-label="Minimize">
            <svg width="12" height="12" viewBox="0 0 12 12"><rect x=".5" y="6.500" width="11" height="4" fill="#fff" stroke="#444455" /></svg>
          </ControlButton>
          <ControlButton $w={27} aria-label="Restore">
            <svg width="12" height="12" viewBox="0 0 12 12" fill="none"><path d="M4 1h7v7H9M1 4h7v7H1z" stroke="#444455" strokeWidth="3" /><path d="M4 1h7v7H9M1 4h7v7H1z" stroke="#fff" strokeWidth="1.500" /></svg>
          </ControlButton>
          <ControlButton $w={47} aria-label="Close"><CloseMark /></ControlButton>
        </Controls>
      </TitleBar>
      <TopRow>
        <MenuFrame>
          <MenuBar>
            {menus.map(([pre, key, post]) => (
              <MenuButton key={pre + key + post}>{pre}{key && <u>{key}</u>}{post}</MenuButton>
            ))}
            <MenuButton $end>Help</MenuButton>
          </MenuBar>
        </MenuFrame>
        <Brand>
          <FrontlineLogo />
          <Product>Genesis 2000<ProductPart>Graphic Editor</ProductPart></Product>
          <DateText>25 Nov 2022<span>02:30 PM</span></DateText>
        </Brand>
      </TopRow>
      <Main>
        <Side>
          <InfoBox>Job : 4acz9002a0</InfoBox>
          <InfoBox>Step: cam</InfoBox>
          <MatrixFrame><MatrixButton>Job Matrix ...</MatrixButton></MatrixFrame>
          <LayerPane>
            <LayerList>
              {layerGroups.map((group, i) => (
                <LayerGroup key={i}>
                  {group.map(layer => (
                    <LayerRow key={layer.name}>
                      <LayerTick type="checkbox" defaultChecked={layer.on} />
                      <Swatch $color={layer.swatch ?? "#000"} />
                      <LayerName $color={layer.bg ?? CYAN}>{layer.name}</LayerName>
                    </LayerRow>
                  ))}
                </LayerGroup>
              ))}
            </LayerList>
            <LayerTrough />
          </LayerPane>
          <SideFill />
          <SelectedBox>Selected : 0</SelectedBox>
        </Side>
        <Canvas>
          <svg shapeRendering="crispEdges" aria-label="Board view">
            {pads.map(([cx, cy]) => (
              <g key={`${cx} ${cy}`}>
                <circle cx={cx} cy={cy} r="203" fill="#ff0000" />
                <circle cx={cx} cy={cy} r="139" fill="#bd9800" />
              </g>
            ))}
          </svg>
        </Canvas>
        <Tools>
          <Palette $edge={CYAN_LIGHT}>
            {viewTools.map(([label, tone, art]) => (
              <ToolButton key={label} $tone={tone} aria-label={label}><Glyph>{art}</Glyph></ToolButton>
            ))}
          </Palette>
          <Palette $edge={TEAL}>
            {editTools.map(([label, tone, art]) => (
              <ToolButton key={label} $tone={tone} aria-label={label}><Glyph>{art}</Glyph></ToolButton>
            ))}
          </Palette>
          <Overview>
            <svg fill="none" shapeRendering="crispEdges" aria-label="Overview">
              <path d="M0 150.500h170M0 291.500h170M.5 0v460" stroke="#1e8c1e" />
              <rect x="8" y="262" width="13" height="16" stroke="#fff" strokeWidth="2" />
              <path d="M5 276l6 6M11 276l-6 6" stroke="#fff" />
            </svg>
          </Overview>
          <Coordinates>
            <div>X = 1.394613mm</div>
            <div>Y = 15.345635mm</div>
          </Coordinates>
        </Tools>
        <HistogramPopup x={110} y={157} layer="drl" color="#449800" pad="r325" />
        <HistogramPopup x={500} y={167} layer="cvia" color="#ff0000" pad={<>r4<Marked>75</Marked></>} selectable />
      </Main>
      <CommandBar>
        <ModeCell $bg={CREAM}>
          <ModeButton aria-label="Corner mode"><ModeIcon><rect x="1.500" y="3.500" width="17" height="18" /><path d="M5.500 6v12h12M6 7l9 9M15 12v4h-4M6 11V7h4" /></ModeIcon></ModeButton>
        </ModeCell>
        <ModeCell $bg={CREAM}>
          <ModeButton aria-label="Angle mode"><ModeIcon><rect x="1.500" y="3.500" width="17" height="18" /><path d="M4 19L16 6M5 18.500h11M7 6v5M12 13l3 3M15 13l-3 3" /></ModeIcon></ModeButton>
        </ModeCell>
        <ModeCell $bg={TEAL}>
          <ModeButton aria-label="Grid mode"><ModeIcon><rect x="1.500" y="3.500" width="17" height="18" /><path d="M7 6h9v12H4V9zM10.500 6v12M4 12.500h12" /></ModeIcon></ModeButton>
        </ModeCell>
        <XYLabel htmlFor="xy">X Y :</XYLabel>
        <Entry><XYInput id="xy" /><Caret /></Entry>
        <ModeCell $bg={TEAL}>
          <ModeButton aria-label="Alert"><ModeIcon><rect x="2.500" y="4.500" width="15" height="16" /><path d="M10 7v7M10 16v2" strokeWidth="2" /></ModeIcon></ModeButton>
        </ModeCell>
        <Prompt>{"<M1> - Select first corner"}</Prompt>
        <UnitCell>
          <UnitSelect aria-label="Units"><option>MM</option></UnitSelect>
          <UnitMark />
        </UnitCell>
      </CommandBar>
      <Strip><StripField /></Strip>
      <Taskbar>
        <Orb aria-label="Start">
          <svg width="38" height="38" viewBox="0 0 38 38">
            <defs><radialGradient id="orb" cx=".5" cy=".9" r=".9"><stop offset="0" stopColor="#4cd8f8" /><stop offset=".5" stopColor="#1c64a8" /><stop offset="1" stopColor="#a8bcd0" /></radialGradient></defs>
            <circle cx="19" cy="19" r="18" fill="url(#orb)" stroke="#7c98b4" />
            <path d="M10 12c3-3 6-2 8-1l-2 8c-2-1-5-2-8 1z" fill="#f06428" /><path d="M20 11c3 2 6 2 9 0l-2 8c-3 2-6 2-9 0z" fill="#8cc83c" />
            <path d="M8 22c3-3 6-2 8-1l-2 8c-2-2-5-2-8 0z" fill="#40a0e8" /><path d="M17 21c3 2 6 2 9 0l-2 8c-3 2-6 2-9 0z" fill="#fcc828" />
          </svg>
        </Orb>
        {tasks.map(t => (
          <TaskButton key={t.label} $active={t.active} $stack={t.stack} aria-label={t.label}><TaskIcon name={t.icon} /></TaskButton>
        ))}
        <Tray>
          <svg width="136" height="24" viewBox="0 0 136 24" fill="none" aria-hidden="true">
            <rect x="0" y="9" width="15" height="9" rx="1" fill="#d0d0d0" stroke="#888" /><path d="M2 11.500h11M2 13.500h11M4 16h7M3 8c1-5 6 0 10-4" stroke="#666677" strokeDasharray="2 1" />
            <circle cx="30" cy="10" r="7" fill="#2038c0" stroke="#d8dcf0" /><text x="30" y="14" fontSize="12" fontWeight="bold" fontFamily="Liberation Sans" textAnchor="middle" fill="#fff">?</text>
            <path d="M50.500 2.500h5v3h-5zM48.500 4.500h5v3h-5z" stroke="#fff" /><path d="M49 15h6l-3 3z" fill="#fff" /><path d="M66 16l4-4 4 4z" fill="#fff" />
            <path d="M88 7v14M89 8h6l1 2h5v6h-6l-1-2h-5z" fill="#fff" stroke="#fff" /><circle cx="98" cy="17" r="5" fill="#d82820" /><path d="M96 15l4 4M100 15l-4 4" stroke="#fff" strokeWidth="1.500" />
            <path d="M112 11h3l4-4v14l-4-4h-3z" fill="#fff" /><path d="M121 11c1 2 1 4 0 6M124 9c2 3 2 7 0 10" stroke="#fff" />
          </svg>
          <svg width="16" height="24" viewBox="0 0 16 24" fill="none" aria-hidden="true"><path d="M6 8h9v8H4M8 19h7M11 16v3M1 7v4h4V7M3 11v8h3M2 4v3M4 4v3" stroke="#fff" strokeWidth="1.500" /></svg>
          <Clock>14:37<span>2022/11/25</span></Clock>
          <ShowDesktop aria-label="Show desktop" />
        </Tray>
      </Taskbar>
    </Screen>
  );
}
